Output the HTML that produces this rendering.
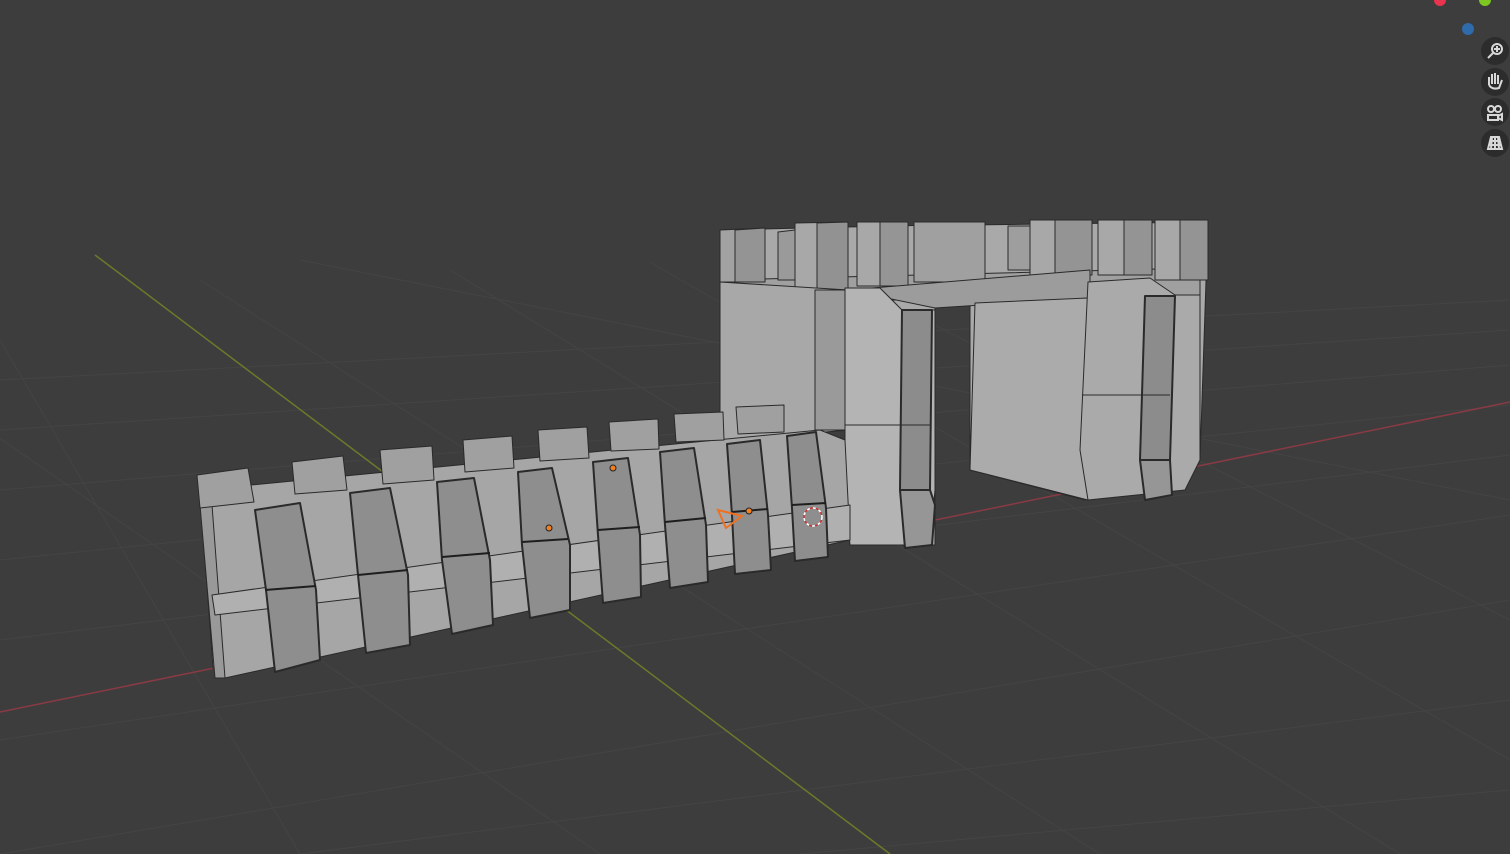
<!DOCTYPE html>
<html><head><style>
html,body{margin:0;padding:0;background:#3d3d3d;width:1510px;height:854px;overflow:hidden}
</style></head><body>
<svg width="1510" height="854" viewBox="0 0 1510 854" xmlns="http://www.w3.org/2000/svg">
<rect width="1510" height="854" fill="#3d3d3d"/>
<g stroke="#444" stroke-width="1" fill="none">
<path d="M0 380 L1510 300 M0 430 L1510 330 M0 490 L1510 365 M0 560 L1510 405 M0 640 L1510 455 M0 740 L1510 515 M0 854 L1510 600 M300 854 L1510 700 M800 854 L1510 790"/>
<path d="M-200 300 L600 854 M200 280 L1100 854 M450 270 L1400 854 M650 262 L1510 760 M800 256 L1510 620 M0 340 L300 854 M300 260 L1510 500"/>
</g>
<line x1="0" y1="712" x2="1510" y2="402" stroke="#8a3a44" stroke-width="1.5"/>
<line x1="95" y1="255" x2="890" y2="854" stroke="#6b7a2a" stroke-width="1.5"/>
<g stroke="#2a2a2a" stroke-width="1" stroke-linejoin="round">
<!-- tower back -->
<polygon points="720,230 935,225 935,545 850,545 845,430 735,440 720,440" fill="#a9a9a9"/>
<polygon points="970,225 1208,222 1200,460 1085,500 970,470" fill="#a9a9a9"/>
<polygon points="720,280 1200,268 1200,300 720,300" fill="#a0a0a0"/>
<!-- merlons -->
<polygon points="720,230 765,228 765,282 720,282" fill="#a2a2a2"/>
<polygon points="735,230 765,228 765,282 735,282" fill="#949494"/>
<polygon points="778,232 795,230 795,280 778,280" fill="#9a9a9a"/>
<polygon points="795,223 848,222 848,290 795,288" fill="#a8a8a8"/>
<polygon points="817,223 848,222 848,290 817,289" fill="#929292"/>
<polygon points="857,222 908,222 908,286 857,286" fill="#a8a8a8"/>
<polygon points="880,222 908,222 908,286 880,286" fill="#959595"/>
<polygon points="914,222 985,222 985,282 914,282" fill="#a0a0a0"/>
<polygon points="1008,226 1030,226 1030,270 1008,270" fill="#9e9e9e"/>
<polygon points="1030,220 1092,220 1092,275 1030,275" fill="#a8a8a8"/>
<polygon points="1055,220 1092,220 1092,275 1055,275" fill="#949494"/>
<polygon points="1098,220 1152,220 1152,275 1098,275" fill="#a8a8a8"/>
<polygon points="1124,220 1152,220 1152,275 1124,275" fill="#949494"/>
<polygon points="1155,220 1208,220 1208,280 1155,280" fill="#a8a8a8"/>
<polygon points="1180,220 1208,220 1208,280 1180,280" fill="#949494"/>
<!-- left tower face -->
<polygon points="720,282 848,290 848,430 735,440 720,440" fill="#a8a8a8"/>
<polygon points="815,290 848,290 848,430 815,430" fill="#9a9a9a"/>
<!-- bridge -->
<polygon points="848,290 1090,270 1090,298 935,308" fill="#9c9c9c"/>
<!-- middle wall -->
<polygon points="975,303 1088,298 1088,500 970,470" fill="#ababab"/>
<!-- left front column -->
<polygon points="845,288 880,288 902,310 935,310 935,490 930,545 850,545 845,490" fill="#b4b4b4"/>
<polygon points="902,310 932,310 930,490 900,490" fill="#8c8c8c" stroke-width="2"/>
<polygon points="900,490 930,490 935,505 932,545 905,548" fill="#969696" stroke-width="2"/>
<line x1="845" y1="425" x2="930" y2="425"/>
<!-- right tower -->
<polygon points="1088,282 1150,278 1175,295 1200,295 1200,460 1185,490 1088,500 1080,450" fill="#aaaaaa"/>
<polygon points="1145,296 1175,296 1170,460 1140,460" fill="#8c8c8c" stroke-width="2"/>
<polygon points="1140,460 1170,460 1172,495 1145,500" fill="#969696" stroke-width="2"/>
<line x1="1082" y1="395" x2="1170" y2="395"/>
<!-- long wall -->
<polygon points="200,490 820,430 845,440 850,540 225,678 213,668" fill="#a6a6a6"/>
<polygon points="200,505 215,678 225,678 212,505" fill="#999"/>
<polygon points="212,595 850,505 850,540 215,615" fill="#b0b0b0"/>
<!-- wall merlons -->
<g fill="#a0a0a0">
<polygon points="197,475 248,468 254,502 200,508"/>
<polygon points="292,462 343,456 347,490 295,494"/>
<polygon points="380,450 432,446 434,480 383,484"/>
<polygon points="463,440 512,436 514,468 465,472"/>
<polygon points="538,430 587,427 589,458 540,461"/>
<polygon points="609,422 658,419 659,449 611,451"/>
<polygon points="674,414 723,412 724,440 676,442"/>
<polygon points="736,407 784,405 784,432 738,434"/>
</g>
<!-- buttresses -->
<g fill="#8e8e8e" stroke-width="2">
<polygon points="255,510 300,503 316,590 320,660 275,672 266,590"/>
<polygon points="350,493 390,488 408,575 410,645 366,653 358,575"/>
<polygon points="437,482 474,478 490,560 493,625 452,634 442,560"/>
<polygon points="518,472 552,468 570,545 570,610 530,618 522,545"/>
<polygon points="593,462 628,458 640,535 641,597 603,603 598,535"/>
<polygon points="660,452 694,448 706,525 708,582 670,588 665,525"/>
<polygon points="727,444 760,440 768,515 771,570 735,574 732,515"/>
<polygon points="787,436 816,432 826,508 828,557 795,561 792,508"/>
</g>
<g stroke="#1e1e1e" stroke-width="2" fill="none">
<path d="M265 590 L316 586 M358 575 L408 570 M442 557 L490 553 M522 542 L568 539 M598 530 L640 527 M665 522 L706 518 M732 512 L768 509 M792 505 L826 503"/>
</g>
</g>
<circle cx="613" cy="468" r="3" fill="#f08020" stroke="#222"/>
<circle cx="549" cy="528" r="3" fill="#f08020" stroke="#222"/>
<circle cx="749" cy="511" r="3" fill="#f08020" stroke="#222"/>
<path d="M718 510 L742 516 L726 528 Z" fill="none" stroke="#f07020" stroke-width="2"/>
<circle cx="813" cy="517" r="9" fill="none" stroke="#fff" stroke-width="1.5" stroke-dasharray="3 3"/>
<circle cx="813" cy="517" r="9" fill="none" stroke="#d03030" stroke-width="1.5" stroke-dasharray="3 3" stroke-dashoffset="3"/>
<circle cx="1440" cy="0" r="6" fill="#e8344e"/>
<circle cx="1485" cy="0" r="6" fill="#7cc821"/>
<circle cx="1468" cy="29" r="6" fill="#2f6aaa"/>
<g fill="#2c2c2c"><circle cx="1495" cy="51" r="14"/><circle cx="1495" cy="82" r="14"/><circle cx="1495" cy="112" r="14"/><circle cx="1495" cy="143" r="14"/></g>
<g stroke="#d8d8d8" stroke-width="2" fill="none">
<circle cx="1497" cy="49" r="5"/><path d="M1493 53 L1488 58 M1497 46 V52 M1494 49 H1500"/>
<path d="M1489 85 L1489 77 M1492 84 V74 M1495 84 V73 M1498 84 V75 M1489 85 Q1492 90 1499 88 L1502 80"/>
<path d="M1488 115 h10 v5 h-10z M1498 116 l4 -2 v6 l-4 -2"/><circle cx="1491" cy="109" r="3"/><circle cx="1498" cy="109" r="3"/>
<path d="M1488 149 L1491 137 H1499 L1502 149 Z M1489 145 H1501 M1490 141 H1500 M1495 137 V149 M1492 137 L1491 149 M1498 137 L1499 149"/>
</g>
</svg>
</body></html>
